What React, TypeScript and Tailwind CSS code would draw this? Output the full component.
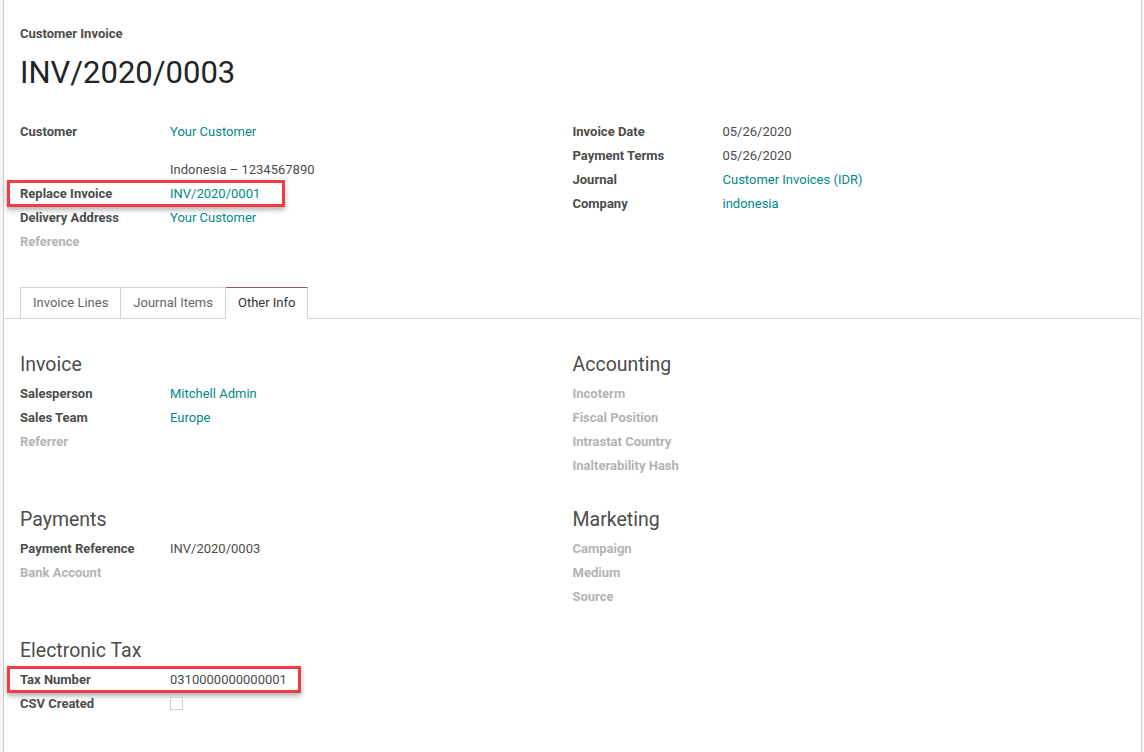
import type { ReactNode } from "react";

const link = "text-[#00898b]";

function Row({ label, children, muted, highlight, width }: { label: string; children?: ReactNode; muted?: boolean; highlight?: boolean; width?: number }) {
  return (
    <div className="relative flex min-h-6 leading-6">
      {highlight && (
        <div
          className="pointer-events-none absolute left-[-13px] top-[-2px] h-[27px] border-[3px] border-[#f03c42] shadow-[0_3px_5px_rgba(0,0,0,0.3)]"
          style={{ width }}
        />
      )}
      <div className={`w-[150px] shrink-0 font-bold ${muted ? "text-[#b3b3b3]" : "text-[#4c4c4c]"}`}>{label}</div>
      <div className="text-[#4c4c4c]">{children}</div>
    </div>
  );
}

function Group({ title, children }: { title: string; children: ReactNode }) {
  return (
    <div>
      <div className="mb-[3px] h-[28px] text-[19.5px] leading-[28px] text-[#4c4c4c]">{title}</div>
      {children}
    </div>
  );
}

export default function App() {
  return (
    <div className="h-[752px] w-[1144px] overflow-hidden bg-[#f5f5f5] text-[13px]" style={{ fontFamily: "Roboto, 'Liberation Sans', sans-serif" }}>
      <div className="ml-[3px] h-full w-[1139px] border-x border-[#c9cdd3] bg-white">
        <div className="px-4">
          <div className="pt-[24px] font-bold leading-5 text-[#4c4c4c]">Customer Invoice</div>
          <h1 className="mt-[9px] text-[31px] leading-[40px] text-[#212529]">INV/2020/0003</h1>

          <div className="mt-[27px] grid grid-cols-2">
            <div>
              <Row label="Customer">
                <div className={link}>Your Customer</div>
                <div className="mt-[14px]">Indonesia – 1234567890</div>
              </Row>
              <Row label="Replace Invoice" highlight width={278}>
                <span className={link}>INV/2020/0001</span>
              </Row>
              <Row label="Delivery Address">
                <span className={link}>Your Customer</span>
              </Row>
              <Row label="Reference" muted />
            </div>
            <div>
              <Row label="Invoice Date">05/26/2020</Row>
              <Row label="Payment Terms">05/26/2020</Row>
              <Row label="Journal">
                <span className={link}>Customer Invoices (IDR)</span>
              </Row>
              <Row label="Company">
                <span className={link}>indonesia</span>
              </Row>
            </div>
          </div>
        </div>

        <div className="mt-[33px] flex border-b border-[#d0d4da] pl-4 leading-[30px]">
          <div className="mb-[-1px] border border-[#d0d4da] px-[12px] text-[#666]">Invoice Lines</div>
          <div className="mb-[-1px] border border-l-0 border-[#d0d4da] px-[12px] text-[#666]">Journal Items</div>
          <div className="mb-[-1px] border border-l-0 border-[#d0d4da] border-t-[#875a7b] border-b-white bg-white px-[12px] text-[#333]">Other Info</div>
        </div>

        <div className="grid grid-cols-2 gap-y-[28px] px-4 pt-[32px]">
          <Group title="Invoice">
            <Row label="Salesperson">
              <span className={link}>Mitchell Admin</span>
            </Row>
            <Row label="Sales Team">
              <span className={link}>Europe</span>
            </Row>
            <Row label="Referrer" muted />
          </Group>
          <Group title="Accounting">
            <Row label="Incoterm" muted />
            <Row label="Fiscal Position" muted />
            <Row label="Intrastat Country" muted />
            <Row label="Inalterability Hash" muted />
          </Group>
          <Group title="Payments">
            <Row label="Payment Reference">INV/2020/0003</Row>
            <Row label="Bank Account" muted />
          </Group>
          <Group title="Marketing">
            <Row label="Campaign" muted />
            <Row label="Medium" muted />
            <Row label="Source" muted />
          </Group>
          <Group title="Electronic Tax">
            <Row label="Tax Number" highlight width={294}>0310000000000001</Row>
            <Row label="CSV Created">
              <div className="mt-[5px] h-[13px] w-[13px] border border-[#cfcfcf] bg-white" />
            </Row>
          </Group>
        </div>
      </div>
    </div>
  );
}
